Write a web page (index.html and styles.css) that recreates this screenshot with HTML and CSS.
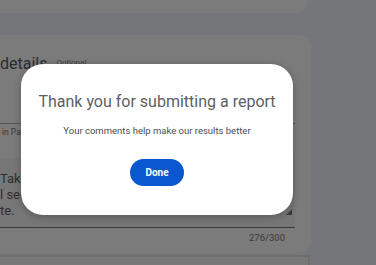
FILE: index.html
```html
<!DOCTYPE html>
<html lang="en">
<head>
    <meta charset="UTF-8">
    <meta name="viewport" content="width=device-width, initial-scale=1.0">
    <title>Report submitted</title>
    <link rel="stylesheet" href="styles.css">
</head>
<body>
    <div class="page">
        <div class="card card-top"></div>

        <div class="card card-details">
            <div class="card-head">
                <span class="card-title">details</span>
                <span class="optional">Optional</span>
            </div>
            <div class="hint">in Paris</div>
            <div class="field">
                <div class="field-text">
                    Take a look<br>
                    l service<br>
                    te.
                </div>
                <span class="resize"></span>
            </div>
            <div class="counter">276/300</div>
        </div>

        <div class="card card-next"></div>
    </div>

    <div class="dialog">
        <h2 class="dialog-title">Thank you for submitting a report</h2>
        <p class="dialog-text">Your comments help make our results better</p>
        <button class="done-btn">Done</button>
    </div>
</body>
</html>
```

FILE: styles.css
```css
html, body {
    margin: 0;
    height: 100%;
    overflow: hidden;
}
body {
    font-family: Roboto, Arial, sans-serif;
    background-color: #74767a;
    color: #333;
}
.page {
    margin-left: -12px;
    width: 323px;
}
.card {
    background-color: #7b7b7b;
    border-radius: 12px;
}
.card-top {
    margin-top: -20px;
    height: 33px;
    width: 320px;
}
.card-details {
    margin-top: 22px;
    height: 218px;
    padding: 0 0 0 12px;
    box-sizing: border-box;
}
.card-head {
    padding-top: 19px;
    height: 89px;
    box-sizing: border-box;
    display: flex;
    align-items: flex-start;
    gap: 9px;
    border-bottom: 1px solid #555;
    width: 295px;
}
.card-title {
    font-size: 16px;
    color: #2d2d2d;
}
.optional {
    font-size: 8px;
    color: #3e3e3e;
    margin-top: 4px;
}
.hint {
    font-size: 8.5px;
    color: #3a3a3a;
    padding-top: 3px;
    height: 34px;
    box-sizing: border-box;
    padding-left: 2px;
}
.field {
    background-color: #777;
    border-bottom: 1px solid #3a3a3a;
    height: 70px;
    padding: 13px 0 0;
    box-sizing: border-box;
    width: 295px;
    position: relative;
}
.field-text {
    font-size: 13px;
    line-height: 16px;
    color: #2f2f2f;
}
.resize {
    position: absolute;
    right: 3px;
    bottom: 12px;
    width: 0;
    height: 0;
    border-left: 6px solid transparent;
    border-bottom: 6px solid #3a3a3a;
}
.counter {
    text-align: right;
    width: 285px;
    margin-top: 4px;
    font-size: 9.5px;
    color: #3a3a3a;
}
.card-next {
    margin-top: 2px;
    height: 40px;
    width: 318px;
    background-color: #787878;
    border: 2px solid #6e6e6e;
    border-radius: 0;
}
.dialog {
    position: absolute;
    left: 21px;
    top: 64px;
    width: 272px;
    height: 151px;
    box-sizing: border-box;
    background-color: #fff;
    border-radius: 22px;
    box-shadow: 0 2px 8px rgba(0, 0, 0, 0.25);
    text-align: center;
    padding-top: 28px;
}
.dialog-title {
    margin: 0;
    font-size: 16px;
    font-weight: normal;
    color: #5c5f63;
}
.dialog-text {
    margin: 14px 0 0;
    font-size: 9.5px;
    color: #4a4d51;
}
.done-btn {
    margin-top: 23px;
    width: 54px;
    height: 27px;
    border: 0;
    border-radius: 14px;
    background-color: #0b57d0;
    color: #fff;
    font-family: Roboto, Arial, sans-serif;
    font-weight: bold;
    font-size: 10px;
}
```
